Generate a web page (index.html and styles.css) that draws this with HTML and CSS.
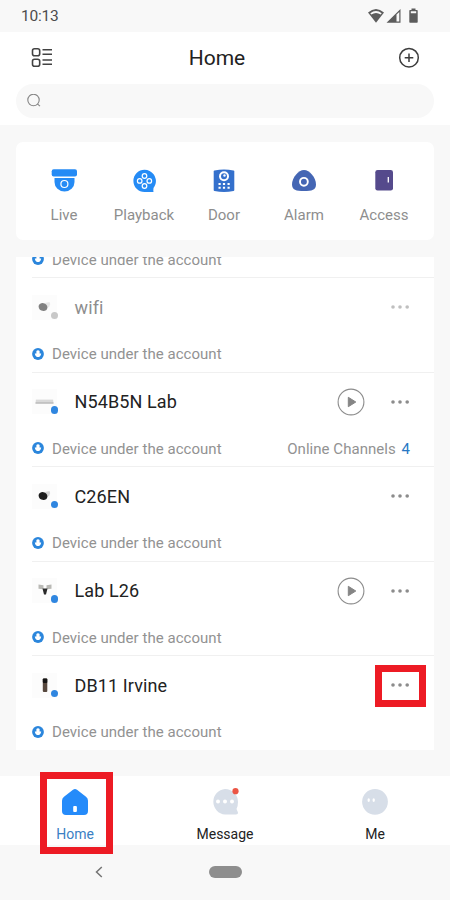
FILE: index.html
```html
<!DOCTYPE html>
<html lang="en">
<head>
<meta charset="utf-8">
<title>Home</title>
<link rel="stylesheet" href="styles.css">
</head>
<body>
<svg class="defs" width="0" height="0">
  <symbol id="badge" viewBox="0 0 12 12"><circle cx="6" cy="6" r="5.900" fill="#2b86dc"/><path d="M4.400 3q1.600-1.400 3.200 0v2.400h1.600q-.2 2-1.400 3.200-1.800 1-3.600 0-1.200-1.200-1.400-3.200h1.600z" fill="#fff"/></symbol>
  <symbol id="play" viewBox="0 0 28 28"><circle cx="14" cy="14" r="12.900" fill="none" stroke="#8c8c8c" stroke-width="1.100"/><path d="M11.300 9.300l7.500 4.700-7.500 4.700z" fill="#858585" stroke="#858585" stroke-linejoin="round"/></symbol>
  <symbol id="dots" viewBox="0 0 20 6"><g fill="#8c8c8c"><circle cx="3" cy="3" r="1.800"/><circle cx="10" cy="3" r="1.800"/><circle cx="17.200" cy="3" r="1.800"/></g></symbol>
  <symbol id="camera" viewBox="0 0 25 25"><path d="M13 8l4.500-1q1.500 2-.2 4.500l-4 3z" fill="#d5d5d5"/><ellipse cx="11" cy="12" rx="4.500" ry="3.900" transform="rotate(25 11 12)" fill="#1d1d1d"/></symbol>
</svg>
<div class="screen">
  <div class="status">
    <span class="clock">10:13</span>
    <svg width="52" height="18" viewBox="0 0 52 18" fill="#5c5c5c"><path d="M0 5.500q8-7 16 0l-8 10.200z"/><path d="M2.300 6.200q5.700-4.300 11.400 0l-1 1.300q-4.700-3-9.400 0z" fill="#f8f8f8"/><path d="M18.500 15.700L32.500 2v13.700zM28.500 7.500v7h2.800V5z" fill-rule="evenodd"/><path d="M43.500 1.500h4v1.500h1.500q.7 0 .7.700v11.300q0 .7-.7.700h-7q-.7 0-.7-.7V3.700q0-.7.7-.7h1.500zM42.800 4.200v2h5.400v-2z" fill-rule="evenodd"/></svg>
  </div>
  <header class="header">
    <div class="titlebar">
      <svg width="22" height="22" viewBox="0 0 22 22" fill="none" stroke="#424242" stroke-width="1.600"><rect x="1.500" y="1.800" width="7.200" height="6.900" rx="2"/><rect x="1.500" y="12.300" width="7.200" height="6.900" rx="2"/><path d="M11.500 2.800H21M11.500 7.300H21M11.500 12.900H21M11.500 17.300H21" stroke-width="1.500"/></svg>
      <h1 class="title">Home</h1>
      <svg width="22" height="22" viewBox="0 0 22 22" fill="none" stroke="#3d3d3d" stroke-width="1.500"><circle cx="11" cy="10.700" r="9.300"/><path d="M11 6.400v8.600M6.700 10.700h8.600"/></svg>
    </div>
    <div class="search"><svg width="14" height="14" viewBox="0 0 14 14" fill="none" stroke="#858585" stroke-width="1.100"><circle cx="6.500" cy="6" r="5.700"/><path d="M10.600 10.100l2.400 2"/></svg></div>
  </header>
  <nav class="shortcuts">
    <div class="shortcut"><svg width="28" height="28" viewBox="0 0 28 28"><rect x="1.700" y="2.200" width="25.300" height="7.300" rx="2" fill="#258bf5"/><path d="M4.500 11h20v4a10 9.500 0 0 1-20 0z" fill="#258bf5"/><circle cx="14.400" cy="17" r="3.500" fill="#258bf5" stroke="#fff" stroke-width="1.200"/></svg>Live</div>
    <div class="shortcut"><svg width="28" height="28" viewBox="0 0 28 28"><path d="M14.500 2.800a11.500 11.200 0 0 1 11 14.200q-.6 2-2 4l-.2 2.500.2 1.500h-9a11.100 11.100 0 0 1 0-22.200z" fill="#258bf5"/><g fill="#258bf5" stroke="#fff" stroke-width="1.200"><circle cx="14.500" cy="9" r="2.300"/><circle cx="9.700" cy="13.900" r="2.300"/><circle cx="19.300" cy="13.900" r="2.300"/><circle cx="14.500" cy="19" r="2.300"/></g></svg>Playback</div>
    <div class="shortcut"><svg width="28" height="28" viewBox="0 0 28 28"><path d="M4.500 3.500Q14 1.700 23.500 3.500q.8.200.8 1v18.500q0 .9-.8 1.100Q14 25.800 4.500 24.100q-.8-.2-.8-1.100V4.500q0-.8.800-1z" fill="#3470cc"/><circle cx="14" cy="9.300" r="5" fill="#fff"/><circle cx="14" cy="9.300" r="3" fill="#3470cc"/><circle cx="14.500" cy="8.500" r="1.200" fill="#fff"/><path d="M8.500 17h2.200M12.900 17h2.200M17.500 17h2.200M8.500 20.800h2.200M12.900 20.800h2.200M17.500 20.800h2.200" stroke="#fff" stroke-width="2"/></svg>Door</div>
    <div class="shortcut"><svg width="28" height="28" viewBox="0 0 28 28"><path d="M14 3c5.500 0 12 7.500 12 14.500 0 5.500-4 6.500-12 6.500S2 23 2 17.500C2 10.500 8.500 3 14 3z" fill="#4466b4"/><circle cx="13.900" cy="14.800" r="3.900" fill="none" stroke="#fff" stroke-width="1.900"/></svg>Alarm</div>
    <div class="shortcut"><svg width="28" height="28" viewBox="0 0 28 28"><rect x="5.300" y="3" width="17.700" height="20.500" rx="2.300" fill="#554a8c"/><path d="M18.300 10v5.500" stroke="#fff" stroke-width="1.300"/></svg>Access</div>
  </nav>
  <main class="devices">
    <section class="device">
      <div class="main"></div>
      <div class="note"><svg class="badge"><use href="#badge"/></svg><span>Device under the account</span></div>
    </section>
    <section class="device offline">
      <div class="main"><div class="thumb"><svg width="25" height="25"><use href="#camera"/></svg><i class="state"></i></div><span class="name">wifi</span><svg class="dots"><use href="#dots"/></svg></div>
      <div class="note"><svg class="badge"><use href="#badge"/></svg><span>Device under the account</span></div>
    </section>
    <section class="device">
      <div class="main"><div class="thumb"><svg width="25" height="25" viewBox="0 0 25 25"><path d="M4 10h17l.5 4.500h-18z" fill="#d9d9d9"/><path d="M4 10.500h17" stroke="#eee"/><path d="M3.500 14h18" stroke="#aaa"/></svg><i class="state"></i></div><span class="name">N54B5N Lab</span><svg class="play"><use href="#play"/></svg><svg class="dots"><use href="#dots"/></svg></div>
      <div class="note"><svg class="badge"><use href="#badge"/></svg><span>Device under the account</span><span class="channels">Online Channels <b>4</b></span></div>
    </section>
    <section class="device">
      <div class="main"><div class="thumb"><svg width="25" height="25"><use href="#camera"/></svg><i class="state"></i></div><span class="name">C26EN</span><svg class="dots"><use href="#dots"/></svg></div>
      <div class="note"><svg class="badge"><use href="#badge"/></svg><span>Device under the account</span></div>
    </section>
    <section class="device">
      <div class="main"><div class="thumb"><svg width="25" height="25" viewBox="0 0 25 25"><path d="M6.500 6.500l5 .8v4l-5-.5zM19.500 6.500l-5 .8v4l5-.5z" fill="#b9b9b5"/><path d="M10.500 10.500h5l-1.500 6h-2z" fill="#292929"/></svg><i class="state"></i></div><span class="name">Lab L26</span><svg class="play"><use href="#play"/></svg><svg class="dots"><use href="#dots"/></svg></div>
      <div class="note"><svg class="badge"><use href="#badge"/></svg><span>Device under the account</span></div>
    </section>
    <section class="device">
      <div class="main"><div class="thumb"><svg width="25" height="25" viewBox="0 0 25 25"><rect x="10.800" y="5.500" width="4.500" height="13.500" rx="1" fill="#57483e"/><rect x="10.800" y="5.500" width="4.500" height="4.500" rx="1" fill="#151515"/></svg><i class="state"></i></div><span class="name">DB11 Irvine</span><span class="more"><svg class="dots"><use href="#dots"/></svg><i class="mark mark-more"></i></span></div>
      <div class="note"><svg class="badge"><use href="#badge"/></svg><span>Device under the account</span></div>
    </section>
  </main>
  <nav class="tabs">
    <div class="tab active"><svg width="30" height="30" viewBox="0 0 30 30"><path d="M13 2.800q2-1.600 4 0l9 7q2 1.500 2 4V24q0 4-4 4H6q-4 0-4-4V13.800q0-2.500 2-4z" fill="#258bfa"/><rect x="13.200" y="19" width="3.700" height="6" rx="1" fill="#fff"/></svg>Home<i class="mark mark-home"></i></div>
    <div class="tab"><svg width="30" height="30" viewBox="0 0 30 30"><path d="M15 2a13 13 0 0 1 13 13q0 4-1.500 7l1.500 3.500q.3 2-2 2H15A12.800 12.800 0 0 1 15 2z" fill="#d7dee8"/><g fill="#fff"><circle cx="8" cy="14.500" r="2"/><circle cx="15" cy="14.500" r="2"/><circle cx="22" cy="14.500" r="2"/></g><circle cx="25.500" cy="4.200" r="3.100" fill="#eb5545"/></svg>Message</div>
    <div class="tab"><svg width="30" height="30" viewBox="0 0 30 30"><circle cx="15" cy="14.800" r="12.900" fill="#d7dee8"/><ellipse cx="8.700" cy="13.100" rx="1.200" ry="1.900" fill="#fff"/><ellipse cx="13.700" cy="13.100" rx="1.200" ry="1.900" fill="#fff"/></svg>Me</div>
  </nav>
  <footer class="system">
    <svg width="8" height="12" viewBox="0 0 8 12" fill="none" stroke="#757575" stroke-width="1.500"><path d="M6.800 1L1.500 6l5.300 5"/></svg>
    <span class="pill"></span><span></span>
  </footer>
</div>
</body>
</html>
```
FILE: styles.css
```css
* { box-sizing: border-box; }
body { margin: 0; font-family: Roboto, "Liberation Sans", sans-serif; background: #f8f8f8; }
svg { display: block; flex: none; }
.defs { display: none; }
.screen { width: 450px; height: 900px; display: flex; flex-direction: column; overflow: hidden; }
.status { height: 32px; display: flex; justify-content: space-between; align-items: center; padding: 0 30px 0 21px; flex: none; }
.clock { font-size: 15.500px; letter-spacing: -.25px; color: #4c4c4c; }
.header { height: 93px; flex: none; background: #fff; }
.titlebar { height: 52px; padding: 0 30px 0 31px; display: flex; align-items: center; justify-content: space-between; }
.title { margin: 0 0 0 -17px; font-size: 21px; font-weight: 400; color: #222; }
.search { height: 34px; margin: 0 16px; padding-left: 11px; border-radius: 17px; background: #f8f8f8; display: flex; align-items: center; }
.shortcuts { height: 98px; flex: none; margin: 17px 16px 0; padding: 0 10px 0 8px; background: #fff; border-radius: 7px; display: grid; grid-template-columns: repeat(5, 1fr); }
.shortcut { display: flex; flex-direction: column; align-items: center; gap: 11px; padding-top: 25px; font-size: 15px; line-height: 18px; color: #8e8e8e; }
.devices { height: 493px; flex: none; margin: 16.500px 16px 0; background: #fff; overflow: hidden; display: flex; flex-direction: column; justify-content: flex-end; }
.device { height: 94.500px; flex: none; margin-left: 16px; border-top: 1px solid #f0f0f0; }
.main { height: 58px; display: flex; align-items: center; padding-right: 24.500px; }
.thumb { position: relative; width: 25px; height: 25px; margin-right: 17.500px; background: #fcfcfc; }
.state { position: absolute; left: 18.500px; top: 17px; width: 7.500px; height: 7.500px; border-radius: 50%; background: #2f86e0; }
.name { font-size: 18px; letter-spacing: .12px; color: #222; margin-right: auto; }
.play { width: 28px; height: 28px; margin-right: 25px; }
.dots { width: 20px; height: 6px; }
.note { height: 36px; display: flex; align-items: center; padding-right: 24px; font-size: 15px; letter-spacing: .04px; color: #929292; }
.badge { width: 12px; height: 12px; margin: -1px 8px 0 0; }
.channels { margin-left: auto; }
.channels b { font-weight: 400; color: #2878c4; margin-left: 2px; }
.offline .name { color: #8e8e8e; }
.offline .thumb svg, .offline .dots { opacity: .55; }
.offline .state { background: #c8c8c8; }
.more, .active { position: relative; }
.mark { position: absolute; border: 7px solid #ed1b24; }
.mark-more { left: -15px; top: -17px; width: 51px; height: 42px; }
.tabs { height: 69px; flex: none; margin-top: 26px; background: #fff; display: grid; grid-template-columns: repeat(3, 1fr); }
.tab { display: flex; flex-direction: column; align-items: center; gap: 8px; padding-top: 11px; font-size: 14px; line-height: 18px; color: #222; }
.active { color: #3b80c4; }
.mark-home { left: 40px; top: -4px; width: 73px; height: 82px; z-index: 1; }
.system { flex: 1; display: grid; grid-template-columns: 1fr 33px 1fr; align-items: center; }
.system svg { margin-left: 95px; }
.pill { height: 12px; border-radius: 6px; background: #8e8e8e; }
```
